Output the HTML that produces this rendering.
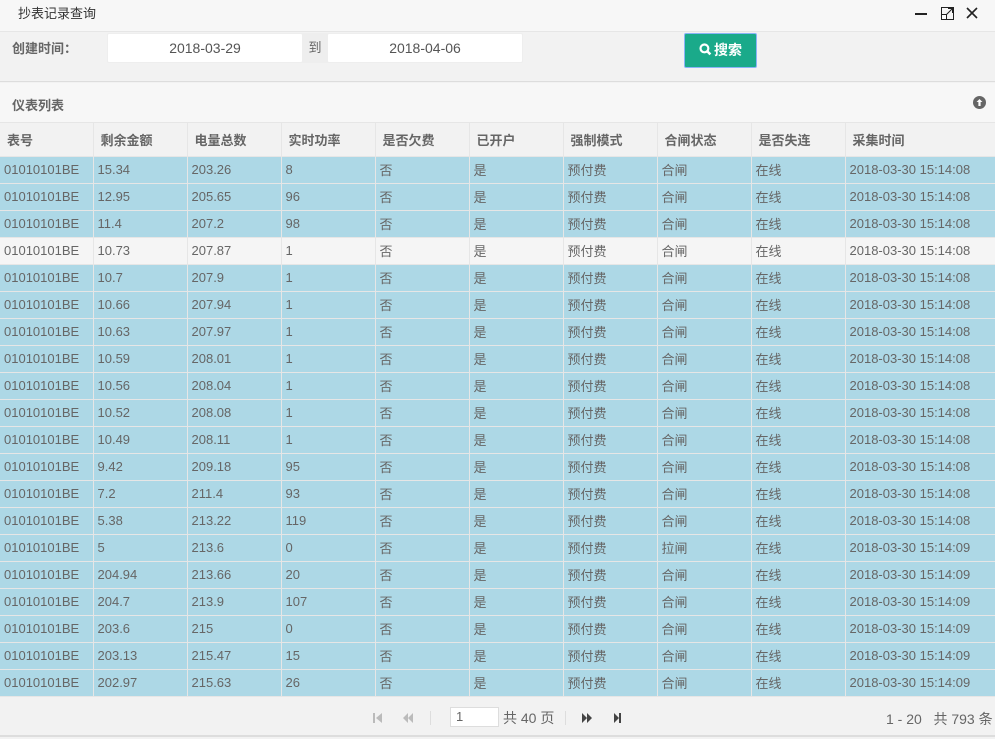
<!DOCTYPE html>
<html><head><meta charset="utf-8"><style>
*{box-sizing:border-box;margin:0;padding:0}
body{width:995px;height:739px;overflow:hidden;background:#f2f2f2;font-family:"Liberation Sans","Noto Sans CJK SC",sans-serif;color:#666;font-size:13px;position:relative}
.abs{position:absolute}
#title{left:0;top:0;width:995px;height:32px;background:#f7f7f7;border-bottom:1px solid #e6e6e6}
#title span{position:absolute;left:18px;top:3px;font-size:13px;color:#333}
#form{left:0;top:33px;width:995px;height:49px;background:#f2f2f2;border-bottom:1px solid #ddd}
.inp{background:#fff;border:1px solid #eee;border-radius:2px;height:30px;line-height:28px;text-align:center;color:#555;font-size:14px}
#ph{left:0;top:83px;width:995px;height:40px;background:#f7f7f7;border-bottom:1px solid #e6e6e6}
table{position:absolute;left:0;top:123px;border-collapse:collapse;table-layout:fixed;width:995px}
td,th{border-right:1px solid #e6e6e6;border-bottom:1px solid #e6e6e6;padding:0 0 0 5px;text-align:left;white-space:nowrap;overflow:hidden}
th{height:33px;background:#f2f2f2;font-weight:bold;color:#666;font-size:13px;padding-left:7px}
td{height:27px;background:#add8e6;color:#666;font-size:13px;padding-left:4px}
tr.w td{background:#f5f5f5}
#pager{left:0;top:697px;width:995px;height:40px;background:#f2f2f2;border-bottom:2px solid #ddd}
</style></head><body>
<div id="title" class="abs"><span>抄表记录查询</span>
<svg class="abs" style="left:912px;top:6px" width="80" height="16" viewBox="0 0 80 16">
<path d="M3 8h12" stroke="#222" stroke-width="2"/>
<rect x="29.5" y="1.5" width="12" height="12" fill="none" stroke="#222"/>
<path d="M34 9l6-6M36 2.5h4.5V7" stroke="#222" fill="none"/><rect x="29.5" y="8.5" width="5" height="5" fill="#fff" stroke="#222"/>
<path d="M55 2l10 10M65 2l-10 10" stroke="#222" stroke-width="1.6"/>
</svg></div>
<div id="form" class="abs">
<div class="abs" style="left:12px;top:5px;font-weight:bold;color:#666;font-size:13px">创建时间：</div>
<div class="abs inp" style="left:107px;top:0;width:196px">2018-03-29</div>
<div class="abs" style="left:302px;top:0;width:26px;height:30px;background:#eee;line-height:30px;text-align:center">到</div>
<div class="abs inp" style="left:327px;top:0;width:196px">2018-04-06</div>
<div class="abs" style="left:684px;top:0;width:73px;height:35px;background:#1aaa8a;border:1px solid #8ab4f8;border-radius:2px;color:#fff;font-weight:bold;font-size:14px;line-height:33px;text-align:center">
<svg width="13" height="13" viewBox="0 0 12 12" style="vertical-align:-1px;margin-right:2px"><circle cx="5" cy="5" r="3.6" fill="none" stroke="#fff" stroke-width="2"/><path d="M7.5 7.5l3 3" stroke="#fff" stroke-width="2.4"/></svg>搜索</div>
</div>
<div id="ph" class="abs"><span class="abs" style="left:12px;top:12px;font-weight:bold;font-size:13px;color:#666">仪表列表</span>
<svg class="abs" style="left:973px;top:13px" width="13" height="13" viewBox="0 0 13 13"><circle cx="6.5" cy="6.5" r="6.5" fill="#666"/><path d="M6.5 3l3 3H7.6v4H5.4V6H3.5z" fill="#fff"/></svg></div>
<table>
<colgroup><col style="width:93px"><col style="width:94px"><col style="width:94px"><col style="width:94px"><col style="width:94px"><col style="width:94px"><col style="width:94px"><col style="width:94px"><col style="width:94px"><col style="width:150px"></colgroup>
<tr><th>表号</th><th>剩余金额</th><th>电量总数</th><th>实时功率</th><th>是否欠费</th><th>已开户</th><th>强制模式</th><th>合闸状态</th><th>是否失连</th><th>采集时间</th></tr>
<tr><td>01010101BE</td><td>15.34</td><td>203.26</td><td>8</td><td>否</td><td>是</td><td>预付费</td><td>合闸</td><td>在线</td><td>2018-03-30 15:14:08</td></tr>
<tr><td>01010101BE</td><td>12.95</td><td>205.65</td><td>96</td><td>否</td><td>是</td><td>预付费</td><td>合闸</td><td>在线</td><td>2018-03-30 15:14:08</td></tr>
<tr><td>01010101BE</td><td>11.4</td><td>207.2</td><td>98</td><td>否</td><td>是</td><td>预付费</td><td>合闸</td><td>在线</td><td>2018-03-30 15:14:08</td></tr>
<tr class="w"><td>01010101BE</td><td>10.73</td><td>207.87</td><td>1</td><td>否</td><td>是</td><td>预付费</td><td>合闸</td><td>在线</td><td>2018-03-30 15:14:08</td></tr>
<tr><td>01010101BE</td><td>10.7</td><td>207.9</td><td>1</td><td>否</td><td>是</td><td>预付费</td><td>合闸</td><td>在线</td><td>2018-03-30 15:14:08</td></tr>
<tr><td>01010101BE</td><td>10.66</td><td>207.94</td><td>1</td><td>否</td><td>是</td><td>预付费</td><td>合闸</td><td>在线</td><td>2018-03-30 15:14:08</td></tr>
<tr><td>01010101BE</td><td>10.63</td><td>207.97</td><td>1</td><td>否</td><td>是</td><td>预付费</td><td>合闸</td><td>在线</td><td>2018-03-30 15:14:08</td></tr>
<tr><td>01010101BE</td><td>10.59</td><td>208.01</td><td>1</td><td>否</td><td>是</td><td>预付费</td><td>合闸</td><td>在线</td><td>2018-03-30 15:14:08</td></tr>
<tr><td>01010101BE</td><td>10.56</td><td>208.04</td><td>1</td><td>否</td><td>是</td><td>预付费</td><td>合闸</td><td>在线</td><td>2018-03-30 15:14:08</td></tr>
<tr><td>01010101BE</td><td>10.52</td><td>208.08</td><td>1</td><td>否</td><td>是</td><td>预付费</td><td>合闸</td><td>在线</td><td>2018-03-30 15:14:08</td></tr>
<tr><td>01010101BE</td><td>10.49</td><td>208.11</td><td>1</td><td>否</td><td>是</td><td>预付费</td><td>合闸</td><td>在线</td><td>2018-03-30 15:14:08</td></tr>
<tr><td>01010101BE</td><td>9.42</td><td>209.18</td><td>95</td><td>否</td><td>是</td><td>预付费</td><td>合闸</td><td>在线</td><td>2018-03-30 15:14:08</td></tr>
<tr><td>01010101BE</td><td>7.2</td><td>211.4</td><td>93</td><td>否</td><td>是</td><td>预付费</td><td>合闸</td><td>在线</td><td>2018-03-30 15:14:08</td></tr>
<tr><td>01010101BE</td><td>5.38</td><td>213.22</td><td>119</td><td>否</td><td>是</td><td>预付费</td><td>合闸</td><td>在线</td><td>2018-03-30 15:14:08</td></tr>
<tr><td>01010101BE</td><td>5</td><td>213.6</td><td>0</td><td>否</td><td>是</td><td>预付费</td><td>拉闸</td><td>在线</td><td>2018-03-30 15:14:09</td></tr>
<tr><td>01010101BE</td><td>204.94</td><td>213.66</td><td>20</td><td>否</td><td>是</td><td>预付费</td><td>合闸</td><td>在线</td><td>2018-03-30 15:14:09</td></tr>
<tr><td>01010101BE</td><td>204.7</td><td>213.9</td><td>107</td><td>否</td><td>是</td><td>预付费</td><td>合闸</td><td>在线</td><td>2018-03-30 15:14:09</td></tr>
<tr><td>01010101BE</td><td>203.6</td><td>215</td><td>0</td><td>否</td><td>是</td><td>预付费</td><td>合闸</td><td>在线</td><td>2018-03-30 15:14:09</td></tr>
<tr><td>01010101BE</td><td>203.13</td><td>215.47</td><td>15</td><td>否</td><td>是</td><td>预付费</td><td>合闸</td><td>在线</td><td>2018-03-30 15:14:09</td></tr>
<tr><td>01010101BE</td><td>202.97</td><td>215.63</td><td>26</td><td>否</td><td>是</td><td>预付费</td><td>合闸</td><td>在线</td><td>2018-03-30 15:14:09</td></tr>
</table>
<div id="pager" class="abs">
<svg class="abs" style="left:370px;top:14px" width="260" height="14" viewBox="0 0 260 14">
<g fill="#bbb"><rect x="3" y="2" width="2" height="10"/><path d="M12 2v10l-6-5z"/>
<path d="M38 2v10l-5-5zM43 2v10l-5-5z"/></g>
<rect x="60" y="0" width="1" height="14" fill="#ddd"/>
<rect x="195" y="0" width="1" height="14" fill="#ddd"/>
<g fill="#444"><path d="M212 2v10l5-5zM217 2v10l5-5z"/><path d="M244 2v10l5-5z"/><rect x="249" y="2" width="2" height="10"/></g>
</svg>
<div class="abs" style="left:450px;top:10px;width:49px;height:20px;background:#fff;border:1px solid #ddd;font-size:13px;padding-left:5px;line-height:18px">1</div>
<div class="abs" style="left:503px;top:11px;font-size:14px">共 40 页</div>
<div class="abs" style="left:886px;top:12px;font-size:14px">1 - 20 &nbsp;&nbsp;共 793 条</div>
</div>
</body></html>
